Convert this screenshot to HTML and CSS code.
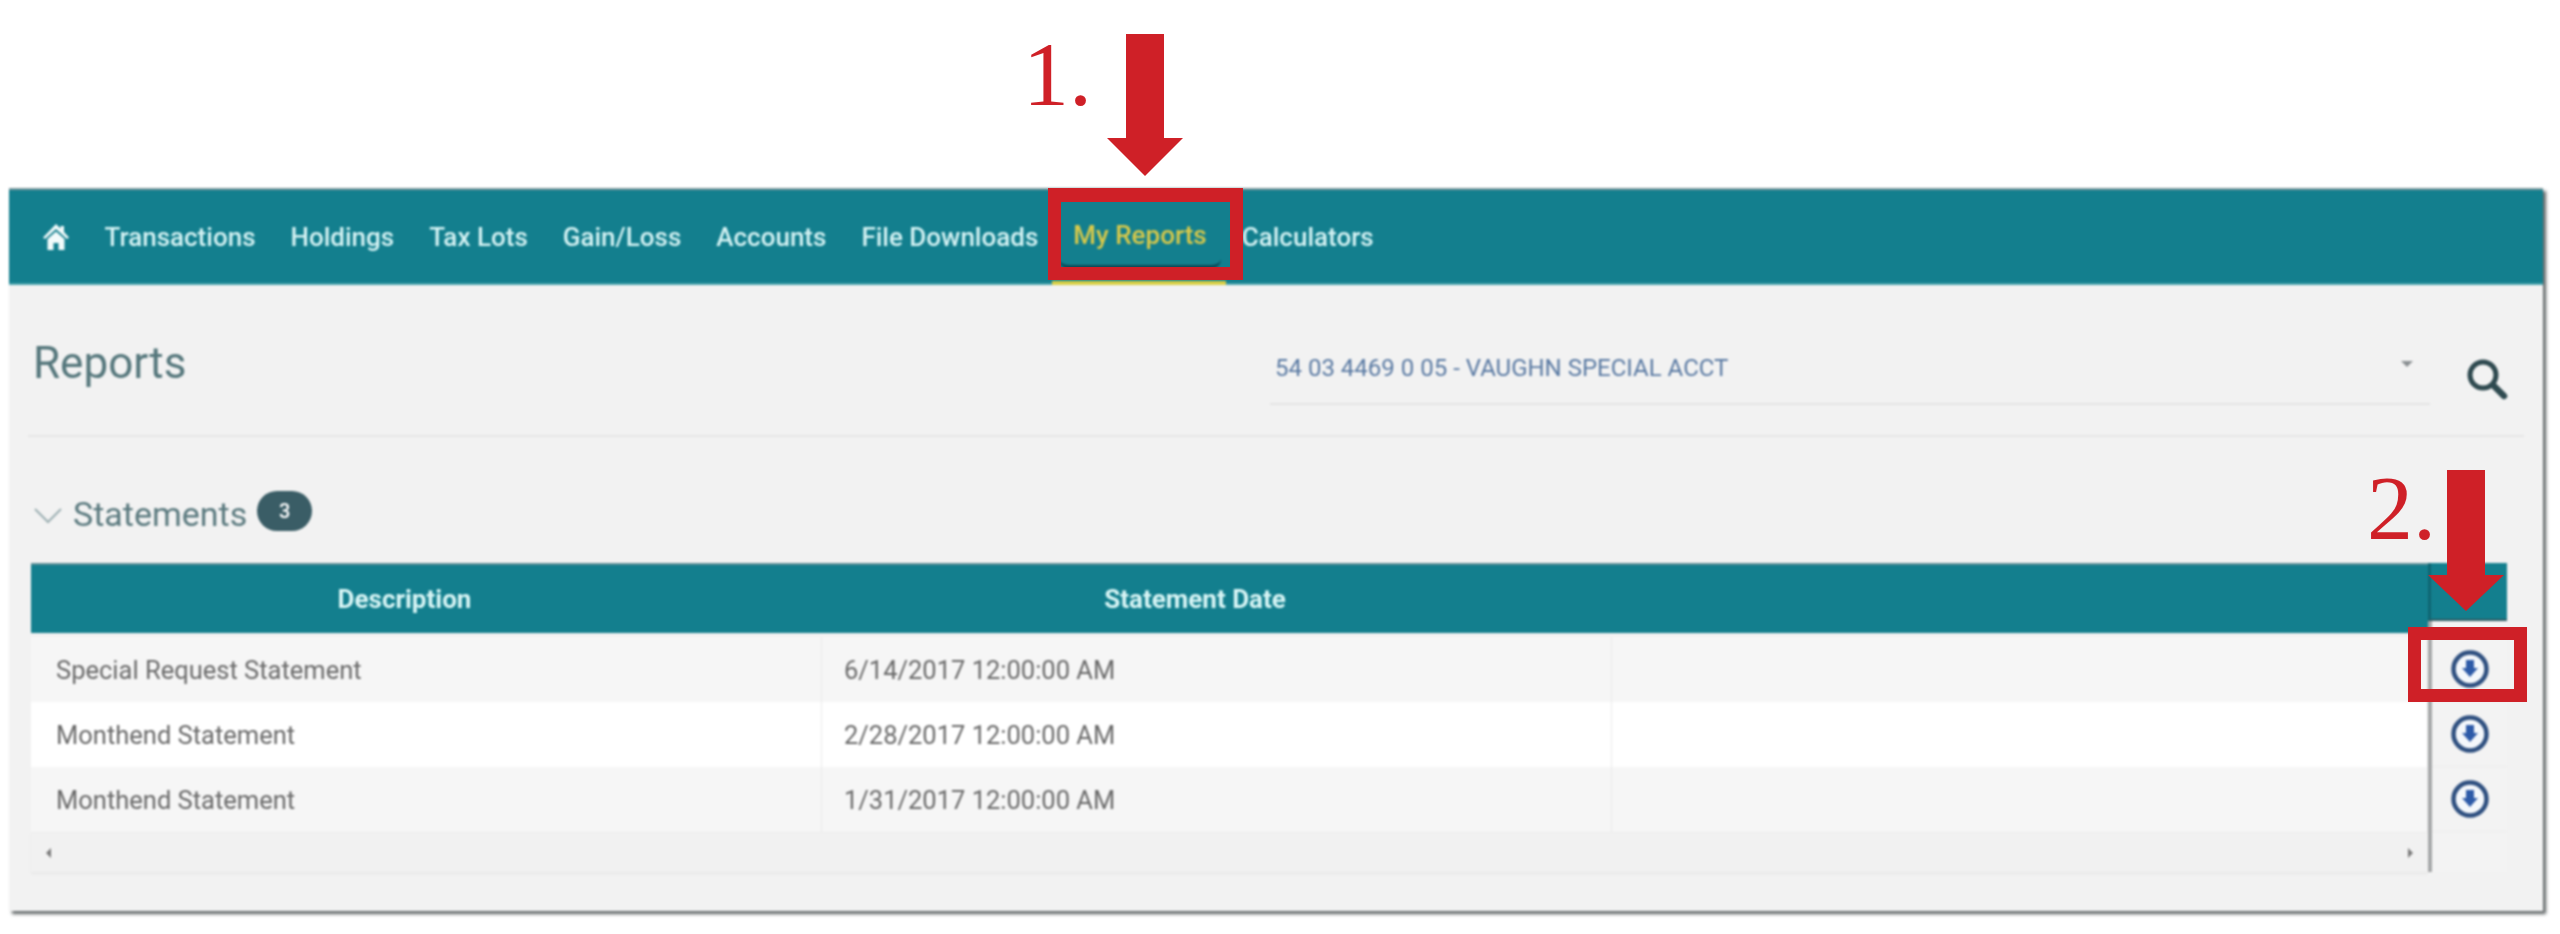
FILE: index.html
```html
<!DOCTYPE html>
<html lang="en">
<head>
<meta charset="utf-8">
<title>Reports</title>
<link rel="stylesheet" href="styles.css">
</head>
<body>
<div class="page">
  <div class="panel">
    <nav class="nav">
      <a class="home" aria-label="Home"><svg viewBox="0 0 28 28" width="28" height="28"><path d="M14 1 L18.5 5.500 V3 H22 V9 L27 14.500 L25 16 L14 6 L3 16 L1 14.500 Z M5.500 16 L14 8.500 L22.500 16 V27 H16.500 V20 H11.500 V27 H5.500 Z" fill="#f2fbfb"/></svg></a>
      <a class="item">Transactions</a>
      <a class="item">Holdings</a>
      <a class="item">Tax Lots</a>
      <a class="item">Gain/Loss</a>
      <a class="item">Accounts</a>
      <a class="item">File Downloads</a>
      <a class="item active"><span>My Reports</span></a>
      <a class="item">Calculators</a>
    </nav>
    <header class="head">
      <h1 class="title">Reports</h1>
      <div class="select"><span>54 03 4469 0 05 - VAUGHN SPECIAL ACCT</span><i class="caret"></i></div>
      <svg class="search" viewBox="0 0 42 42" width="42" height="42"><circle cx="17" cy="17" r="13" fill="none" stroke="#2f4a50" stroke-width="5"/><path d="M27 27 L38 38" stroke="#2f4a50" stroke-width="6.5" stroke-linecap="round"/></svg>
    </header>
    <section class="section">
      <div class="sec-title">
        <svg class="chev" viewBox="0 0 28 16" width="28" height="16"><path d="M1 1 L14 14 L27 1" fill="none" stroke="#9db0b3" stroke-width="2"/></svg>
        <span>Statements</span><b class="badge">3</b>
      </div>
      <div class="grid">
        <div class="main">
          <div class="thead"><div class="c1">Description</div><div class="c2">Statement Date</div><div class="c3"></div></div>
          <div class="row odd"><div class="c1">Special Request Statement</div><div class="c2">6/14/2017 12:00:00 AM</div><div class="c3"></div></div>
          <div class="row"><div class="c1">Monthend Statement</div><div class="c2">2/28/2017 12:00:00 AM</div><div class="c3"></div></div>
          <div class="row odd"><div class="c1">Monthend Statement</div><div class="c2">1/31/2017 12:00:00 AM</div><div class="c3"></div></div>
          <div class="scroll"><i class="tri-l"></i><i class="tri-r"></i></div>
        </div>
        <div class="frozen">
          <div class="fhead"></div>
          <div class="fcell"><svg class="dl" viewBox="0 0 38 38" width="38" height="38"><circle cx="19" cy="19" r="16.500" fill="#f4f7fb" stroke="#2f5080" stroke-width="4.500"/><path d="M15 10 H23 V18 H27 L19 27 L11 18 H15 Z" fill="#2d5aa8"/></svg></div>
          <div class="fcell"><svg class="dl" viewBox="0 0 38 38" width="38" height="38"><circle cx="19" cy="19" r="16.500" fill="#f4f7fb" stroke="#2f5080" stroke-width="4.500"/><path d="M15 10 H23 V18 H27 L19 27 L11 18 H15 Z" fill="#2d5aa8"/></svg></div>
          <div class="fcell"><svg class="dl" viewBox="0 0 38 38" width="38" height="38"><circle cx="19" cy="19" r="16.500" fill="#f4f7fb" stroke="#2f5080" stroke-width="4.500"/><path d="M15 10 H23 V18 H27 L19 27 L11 18 H15 Z" fill="#2d5aa8"/></svg></div>
        </div>
      </div>
    </section>
  </div>

  <div class="num n1">1.</div>
  <svg class="arrow a1" viewBox="0 0 76 142" width="76" height="142"><path d="M19 0 H57 V104 H76 L38 142 L0 104 H19 Z" fill="#cf2027"/></svg>
  <div class="mark m1"></div>
  <div class="num n2">2.</div>
  <svg class="arrow a2" viewBox="0 0 76 142" width="76" height="142"><path d="M19 0 H57 V105 H76 L38 141 L0 105 H19 Z" fill="#cf2027"/></svg>
  <div class="mark m2"></div>
</div>
</body>
</html>
```
FILE: styles.css
```css
* { box-sizing: border-box; }
html, body { margin: 0; background: #fff; }
body { font-family: Roboto, "Liberation Sans", sans-serif; overflow: hidden; }
.page { position: relative; width: 2560px; height: 934px; padding: 188px 17px 0 9px; }
.panel { height: 723px; background: #f2f2f2; box-shadow: 3px 3px 3px #5f6566; filter: blur(.9px); }

.nav { height: 97px; background: #137f8e; display: flex; align-items: center; border-top: 2px solid #7d9a9f; border-bottom: 2px solid #4aa3ad; padding-left: 33px; }
.home { display: flex; width: 45px; }
.item { position: relative; padding: 0 17.5px; height: 100%; display: flex; align-items: center; color: #d5f3f4; font-size: 26px; font-weight: 500; white-space: nowrap; }
.active { color: #d8c94a; }
.active span { display: flex; align-items: center; height: 65px; padding: 0 14px; margin: 0 -14px; border-radius: 10px; border-bottom: 4px solid #0d4a58; }
.active::after { content: ""; position: absolute; left: -4px; right: -2px; bottom: -2px; height: 4px; background: #d8cf45; }

.head { height: 152px; margin: 0 19px; display: flex; align-items: flex-start; border-bottom: 2px solid #e6e6e6; position: relative; }
.title { margin: 53px 0 0 5px; width: 1237px; font-size: 44px; font-weight: 400; line-height: 50px; color: #55777c; }
.select { margin-top: 47px; width: 1160px; height: 73px; border-bottom: 2px solid #e4e4e4; display: flex; justify-content: space-between; align-items: center; padding: 0 17px 0 5px; font-size: 24px; color: #5a7aa3; }
.caret { border: 6px solid transparent; border-top: 6px solid #8a8f92; border-bottom: 0; margin-bottom: 8px; }
.search { margin: 73px 0 0 36px; }

.section { padding: 0 36px 0 22px; }
.sec-title { height: 126px; padding-top: 28px; display: flex; align-items: center; font-size: 34px; font-weight: 400; color: #5b7a7f; }
.chev { margin: 4px 11px 0 3px; }
.badge { margin: -6px 0 0 10px; width: 55px; height: 40px; border-radius: 20px; background: #3a5d66; color: #fff; font-size: 20px; font-weight: 500; display: flex; align-items: center; justify-content: center; }

.grid { display: flex; height: 309px; }
.main { width: 2397px; }
.thead { height: 70px; background: #137f8e; display: flex; align-items: center; color: #d9f6f6; font-size: 26px; font-weight: 700; text-align: center; border-top: 2px solid #5e8f97; margin-bottom: 4px; }
.thead .c1, .thead .c2 { padding-right: 44px; }
.row { display: flex; height: 65px; align-items: center; font-size: 25.500px; font-weight: 400; color: #6a6a6a; background: #fff; }
.row.odd { background: #f6f6f6; }
.c1 { width: 791px; flex: none; }
.c2 { width: 790px; flex: none; }
.c3 { flex: 1; }
.row .c1 { padding-left: 25px; }
.row .c2 { padding-left: 22px; }
.row > div { height: 100%; display: flex; align-items: center; border-right: 1px solid #eaeaea; }
.scroll { height: 40px; background: #f1f1f1; display: flex; justify-content: space-between; align-items: center; padding: 0 15px; border-top: 1px solid #ececec; box-shadow: 0 2px 2px #e8e8e8; }
.tri-l { border: 5px solid transparent; border-left: 0; border-right: 5px solid #7a7a7a; }
.tri-r { border: 5px solid transparent; border-right: 0; border-left: 5px solid #7a7a7a; }

.frozen { width: 79px; border-left: 4px solid #a6a8a9; background: #f3f3f3; }
.fhead { height: 58px; margin: 0 0 16px -4px; background: #137f8e; border-bottom: 2px solid #2f5a62; border-left: 3px solid #0f6673; }
.fcell { height: 65px; display: flex; align-items: center; justify-content: center; border-bottom: 1px solid #ececec; }

.num { position: absolute; font-family: "Liberation Serif", serif; font-size: 92px; line-height: 1; color: #cf2027; }
.n1 { left: 1023px; top: 28px; }
.n2 { left: 2367px; top: 462px; }
.arrow { position: absolute; }
.a1 { left: 1107px; top: 34px; }
.a2 { left: 2428px; top: 470px; }
.mark { position: absolute; border-style: solid; border-color: #cf2027; }
.m1 { left: 1048px; top: 188px; width: 195px; height: 92px; border-width: 14px 13px 13px; }
.m2 { left: 2408px; top: 627px; width: 119px; height: 75px; border-width: 13px 13px 13px; }
```
